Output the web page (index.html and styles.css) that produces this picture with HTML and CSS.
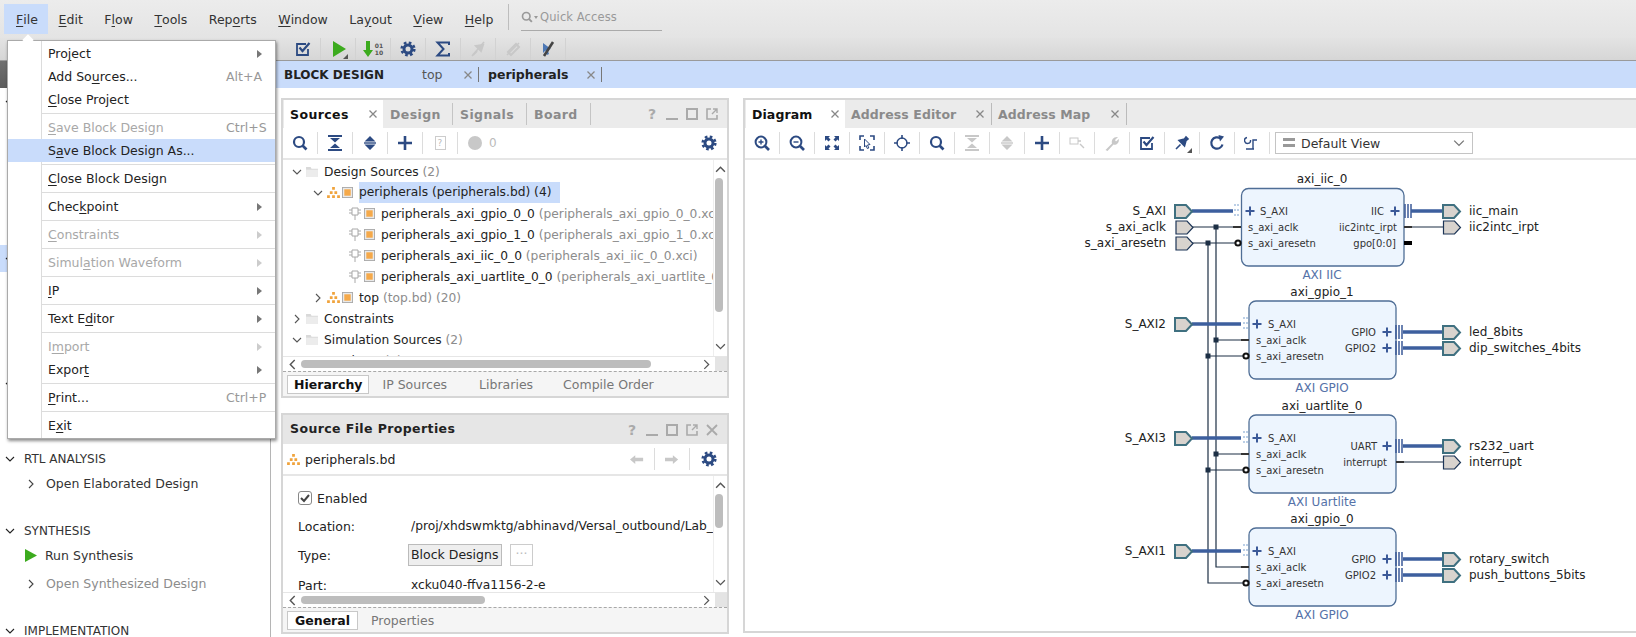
FILE: index.html
```html
<!DOCTYPE html>
<html lang="en">
<head>
    <meta charset="UTF-8">
    <title>Vivado - Block Design</title>
    <link rel="stylesheet" href="styles.css">
</head>
<body>
    <!-- Shared icons -->
    <svg class="defs" width="0" height="0">
        <symbol id="search" viewBox="0 0 16 16"><circle cx="7" cy="7" r="5" fill="none" stroke="currentColor" stroke-width="2.2"/><path d="M10.5 10.5 14.5 14.5" stroke="currentColor" stroke-width="2.6"/></symbol>
        <symbol id="collapse" viewBox="0 0 16 16"><path d="M1 1H15M1 15H15" stroke="currentColor" stroke-width="1.8"/><path d="M3 3H13L8 7.5ZM3 13H13L8 8.5Z" fill="currentColor"/></symbol>
        <symbol id="expand" viewBox="0 0 16 16"><path d="M8 1 13.5 6.5H2.5ZM8 15 13.5 9.5H2.5Z" fill="currentColor"/><path d="M2 8H14" stroke="currentColor" stroke-width="1.4"/></symbol>
        <symbol id="plus" viewBox="0 0 16 16"><path d="M8 1V15M1 8H15" stroke="currentColor" stroke-width="2.6"/></symbol>
        <symbol id="gear" viewBox="0 0 16 16"><circle cx="8" cy="8" r="4" fill="none" stroke="currentColor" stroke-width="3"/><circle cx="8" cy="8" r="6.3" fill="none" stroke="currentColor" stroke-width="2.6" stroke-dasharray="2.6 2.35"/></symbol>
        <symbol id="check" viewBox="0 0 16 16"><path d="M13 8V14H2V3H11" fill="none" stroke="currentColor" stroke-width="1.8"/><path d="M4.5 6.5 7.5 10 14.5 2" fill="none" stroke="currentColor" stroke-width="2.2"/></symbol>
        <symbol id="sigma" viewBox="0 0 16 16"><path d="M14 4V1.5H2.5L8.5 8 2.5 14.5H14V12" fill="none" stroke="currentColor" stroke-width="2"/></symbol>
        <symbol id="pinoff" viewBox="0 0 16 16"><path d="M3 14 7 10M6 5 11 10 13 4Z" fill="currentColor" stroke="currentColor" stroke-width="2"/><path d="M2 15 14 1" stroke="currentColor" stroke-width="1.6"/></symbol>
        <symbol id="plug" viewBox="0 0 16 16"><path d="M3 11 11 3 14 6 6 14Z" fill="none" stroke="currentColor" stroke-width="2"/><path d="M2 14 14 2" stroke="currentColor" stroke-width="1.5"/></symbol>
        <symbol id="crossmouse" viewBox="0 0 16 16"><path d="M3 2 11 8 7.5 8.5 9 13 7 14 5.5 9.5 3 12Z" fill="#4d78b5"/><path d="M13 1 4 15" stroke="#444" stroke-width="2.6"/></symbol>
        <symbol id="zoomin" viewBox="0 0 16 16"><circle cx="7" cy="7" r="5.4" fill="none" stroke="currentColor" stroke-width="2"/><path d="M11 11 15 15" stroke="currentColor" stroke-width="2.6"/><path d="M4.5 7H9.5M7 4.5V9.5" stroke="currentColor" stroke-width="1.4"/></symbol>
        <symbol id="zoomout" viewBox="0 0 16 16"><circle cx="7" cy="7" r="5.4" fill="none" stroke="currentColor" stroke-width="2"/><path d="M11 11 15 15" stroke="currentColor" stroke-width="2.6"/><path d="M4.5 7H9.5" stroke="currentColor" stroke-width="1.4"/></symbol>
        <symbol id="fit" viewBox="0 0 16 16"><path d="M1 1H6L4.5 2.5 6.5 4.5 4.5 6.5 2.5 4.5 1 6ZM15 1V6L13.500 4.500 11.500 6.500 9.500 4.500 11.500 2.500 10 1ZM1 15V10L2.500 11.500 4.500 9.500 6.500 11.500 4.500 13.500 6 15ZM15 15H10L11.500 13.500 9.500 11.500 11.500 9.500 13.500 11.500 15 10Z" fill="currentColor"/></symbol>
        <symbol id="area" viewBox="0 0 16 16"><path d="M1 5V1H5M11 1H15V5M15 11V15H11M5 15H1V11" fill="none" stroke="currentColor" stroke-width="1.6"/><path d="M5.500 4 11 9.500 8.500 10 9.800 13 8.300 13.500 7 10.500 5.500 12Z" fill="none" stroke="currentColor" stroke-width="1"/></symbol>
        <symbol id="target" viewBox="0 0 16 16"><circle cx="8" cy="8" r="5" fill="none" stroke="currentColor" stroke-width="1.4"/><path d="M8 0V4M8 12V16M0 8H4M12 8H16" stroke="currentColor" stroke-width="1.6"/></symbol>
        <symbol id="route" viewBox="0 0 16 16"><rect x="1" y="3" width="8" height="6" fill="none" stroke="currentColor"/><path d="M9 6H12M11 9 15 13" stroke="currentColor" stroke-width="1.4"/></symbol>
        <symbol id="wrench" viewBox="0 0 16 16"><path d="M1.500 15 8 8.500C7 5 9.500 1.500 14 2L11 5 12 6.500 14.800 4C15.500 8.500 11.500 10.500 9.500 9.500L3.500 16Z" fill="currentColor"/></symbol>
        <symbol id="pin" viewBox="0 0 16 16"><path d="M2 14 6.500 9.500M5 5.500 10.500 11 12 5.500 14 4 12 2 10.500 4Z" fill="currentColor" stroke="currentColor" stroke-width="1.6"/></symbol>
        <symbol id="refresh" viewBox="0 0 16 16"><path d="M13.500 9.500A5.700 5.700 0 1 1 11.500 3.500" fill="none" stroke="currentColor" stroke-width="2.200"/><path d="M9.500 0 15 1.500 11 6.500Z" fill="currentColor"/></symbol>
        <symbol id="regen" viewBox="0 0 16 16"><path d="M2 14H10M13 5H9V14" fill="none" stroke="currentColor" stroke-width="1.400"/><path d="M6.500 5A3 3 0 1 1 3 2.500" fill="none" stroke="currentColor" stroke-width="1.400"/></symbol>
        <symbol id="hier" viewBox="0 0 14 12"><path d="M5.500 0H8.500V3H5.500ZM3 4.500H6V7.500H3ZM8 4.500H11V7.500H8ZM0 9H3V12H0ZM5.500 9H8.500V12H5.500ZM11 9H14V12H11Z" fill="#f0a33c"/></symbol>
        <symbol id="sq" viewBox="0 0 12 12"><rect x=".5" y=".5" width="11" height="11" fill="#e9e9e9" stroke="#a9a9a9"/><rect x="2.500" y="2.500" width="7" height="7" fill="#f5a94a"/></symbol>
        <symbol id="cell" viewBox="0 0 12 13"><path d="M3 1H9V8H3ZM6 8V13M0 3H3M0 6H3M9 3H12M9 6H12" fill="none" stroke="#a8a8a8"/></symbol>
        <symbol id="folder" viewBox="0 0 13 12"><path d="M0 1H5L6 3H13V12H0Z" fill="#d9d9d9"/><path d="M0 4H13V12H0Z" fill="#ececec"/></symbol>
        <symbol id="down" viewBox="0 0 10 10"><path d="M1 3 5 7 9 3" fill="none" stroke="currentColor" stroke-width="1.100"/></symbol>
        <symbol id="right" viewBox="0 0 10 10"><path d="M3 1 7 5 3 9" fill="none" stroke="currentColor" stroke-width="1.100"/></symbol>
        <symbol id="up" viewBox="0 0 10 10"><path d="M1 7 5 3 9 7" fill="none" stroke="currentColor" stroke-width="1.300"/></symbol>
        <symbol id="left" viewBox="0 0 10 10"><path d="M7 1 3 5 7 9" fill="none" stroke="currentColor" stroke-width="1.300"/></symbol>
        <symbol id="close" viewBox="0 0 10 10"><path d="M1.500 1.500 8.500 8.500M8.500 1.500 1.500 8.500" stroke="currentColor" stroke-width="1.300"/></symbol>
        <symbol id="mini" viewBox="0 0 14 14"><path d="M1 12H13" stroke="currentColor" stroke-width="2"/></symbol>
        <symbol id="maxi" viewBox="0 0 14 14"><rect x="2" y="2" width="10" height="10" fill="none" stroke="currentColor" stroke-width="2"/></symbol>
        <symbol id="pop" viewBox="0 0 14 14"><path d="M6 2H2V12H12V8" fill="none" stroke="currentColor" stroke-width="1.600"/><path d="M7 7 12 2M8 2H12V6" fill="none" stroke="currentColor" stroke-width="1.400"/></symbol>
        <symbol id="big-x" viewBox="0 0 14 14"><path d="M2 2 12 12M12 2 2 12" stroke="currentColor" stroke-width="1.800"/></symbol>
        <symbol id="arrow-l" viewBox="0 0 16 10"><path d="M0 5 6 0V3H15V7H6V10Z" fill="currentColor"/></symbol>
        <symbol id="arrow-r" viewBox="0 0 16 10"><path d="M15 5 9 0V3H0V7H9V10Z" fill="currentColor"/></symbol>
        <symbol id="bars" viewBox="0 0 12 10"><path d="M0 0H12V3H0ZM0 6H12V9H0Z" fill="currentColor"/></symbol>
    </svg>

    <!-- Menu bar -->
    <div class="menubar">
        <div class="mb-item active"><u>F</u>ile</div>
        <div class="mb-item"><u>E</u>dit</div>
        <div class="mb-item">F<u>l</u>ow</div>
        <div class="mb-item"><u>T</u>ools</div>
        <div class="mb-item">Rep<u>o</u>rts</div>
        <div class="mb-item"><u>W</u>indow</div>
        <div class="mb-item">La<u>y</u>out</div>
        <div class="mb-item"><u>V</u>iew</div>
        <div class="mb-item"><u>H</u>elp</div>
        <div class="quick">
            <svg class="quick-ic"><use href="#search"/></svg><span class="quick-caret"></span>
            <span>Quick Access</span>
        </div>
    </div>

    <!-- Main toolbar -->
    <div class="toolbar">
        <div class="tb-btn navy"><svg class="ic"><use href="#check"/></svg></div>
        <div class="tb-btn">
            <svg class="ic"><path d="M3 0 16 8 3 16Z" fill="#3cab1e"/></svg>
            <span class="corner"></span>
        </div>
        <div class="tb-btn">
            <svg class="ic bit"><path d="M3 0H7V9H10L5 16 0 9H3Z" fill="#3cab1e"/></svg>
            <span class="bits">01<br>10</span>
        </div>
        <div class="tb-btn navy"><svg class="ic"><use href="#gear"/></svg></div>
        <div class="tb-btn navy"><svg class="ic"><use href="#sigma"/></svg></div>
        <div class="tb-btn off"><svg class="ic"><use href="#pinoff"/></svg></div>
        <div class="tb-btn off"><svg class="ic"><use href="#plug"/></svg></div>
        <div class="tb-btn"><svg class="ic"><use href="#crossmouse"/></svg></div>
    </div>

    <div class="workspace">
        <!-- Flow navigator -->
        <aside class="nav">
            <div class="nav-header"></div>
            <div class="nav-head first"><svg class="nav-chev"><use href="#down"/></svg></div>
            <div class="nav-blank-a"></div>
            <div class="nav-head picked"><svg class="nav-chev"><use href="#down"/></svg></div>
            <div class="nav-blank-b"></div>
            <div class="nav-head"><svg class="nav-chev"><use href="#down"/></svg></div>
            <div class="nav-blank-c"></div>

            <div class="nav-head"><svg class="nav-chev"><use href="#down"/></svg><span>RTL ANALYSIS</span></div>
            <div class="nav-item"><svg class="nav-arrow"><use href="#right"/></svg><span>Open Elaborated Design</span></div>

            <div class="nav-head gap"><svg class="nav-chev"><use href="#down"/></svg><span>SYNTHESIS</span></div>
            <div class="nav-item"><svg class="nav-run"><path d="M0 0 12 6.500 0 13Z" fill="#3cab1e"/></svg><span>Run Synthesis</span></div>
            <div class="nav-item muted"><svg class="nav-arrow"><use href="#right"/></svg><span>Open Synthesized Design</span></div>

            <div class="nav-head gap"><svg class="nav-chev"><use href="#down"/></svg><span>IMPLEMENTATION</span></div>
        </aside>

        <main class="content">
            <!-- Document tabs -->
            <div class="doc-tabs">
                <span class="doc-title">BLOCK DESIGN</span>
                <span class="doc-tab top-tab">top</span>
                <svg class="doc-x"><use href="#close"/></svg>
                <span class="doc-sep"></span>
                <span class="doc-tab current">peripherals</span>
                <svg class="doc-x"><use href="#close"/></svg>
                <span class="doc-sep"></span>
            </div>

            <div class="panels">
                <div class="left-col">
                    <!-- Sources -->
                    <section class="panel sources">
                        <div class="panel-head">
                            <div class="tab on"><span>Sources</span><svg class="tab-x"><use href="#close"/></svg></div>
                            <div class="tab plain">Design</div>
                            <div class="tab plain">Signals</div>
                            <div class="tab plain">Board</div>
                            <div class="head-tools">
                                <span class="qm">?</span>
                                <svg class="win"><use href="#mini"/></svg>
                                <svg class="win"><use href="#maxi"/></svg>
                                <svg class="win"><use href="#pop"/></svg>
                            </div>
                        </div>
                        <div class="panel-tools">
                            <div class="tb-btn navy"><svg class="ic"><use href="#search"/></svg></div>
                            <div class="tb-btn navy"><svg class="ic"><use href="#collapse"/></svg></div>
                            <div class="tb-btn navy"><svg class="ic"><use href="#expand"/></svg></div>
                            <div class="tb-btn navy"><svg class="ic"><use href="#plus"/></svg></div>
                            <div class="tb-btn off"><span class="doc-q">?</span></div>
                            <div class="tool-count"><span class="dot"></span><span>0</span></div>
                            <div class="tool-right navy"><svg class="ic"><use href="#gear"/></svg></div>
                        </div>
                        <div class="panel-body">
                            <div class="tree">
                                <div class="row lvl0"><svg class="chev"><use href="#down"/></svg><svg class="folder"><use href="#folder"/></svg><span>Design Sources <em>(2)</em></span></div>
                                <div class="row lvl1"><svg class="chev"><use href="#down"/></svg><svg class="hier"><use href="#hier"/></svg><svg class="sq"><use href="#sq"/></svg><span class="picked-row">peripherals (peripherals.bd) (4)</span></div>
                                <div class="row lvl2"><svg class="cell"><use href="#cell"/></svg><svg class="sq"><use href="#sq"/></svg><span>peripherals_axi_gpio_0_0 <em>(peripherals_axi_gpio_0_0.xci)</em></span></div>
                                <div class="row lvl2"><svg class="cell"><use href="#cell"/></svg><svg class="sq"><use href="#sq"/></svg><span>peripherals_axi_gpio_1_0 <em>(peripherals_axi_gpio_1_0.xci)</em></span></div>
                                <div class="row lvl2"><svg class="cell"><use href="#cell"/></svg><svg class="sq"><use href="#sq"/></svg><span>peripherals_axi_iic_0_0 <em>(peripherals_axi_iic_0_0.xci)</em></span></div>
                                <div class="row lvl2"><svg class="cell"><use href="#cell"/></svg><svg class="sq"><use href="#sq"/></svg><span>peripherals_axi_uartlite_0_0 <em>(peripherals_axi_uartlite_0_0.xci)</em></span></div>
                                <div class="row lvl1"><svg class="chev"><use href="#right"/></svg><svg class="hier"><use href="#hier"/></svg><svg class="sq"><use href="#sq"/></svg><span>top <em>(top.bd) (20)</em></span></div>
                                <div class="row lvl0"><svg class="chev"><use href="#right"/></svg><svg class="folder"><use href="#folder"/></svg><span>Constraints</span></div>
                                <div class="row lvl0"><svg class="chev"><use href="#down"/></svg><svg class="folder"><use href="#folder"/></svg><span>Simulation Sources <em>(2)</em></span></div>
                                <div class="row lvl1"><svg class="chev"><use href="#right"/></svg><svg class="folder"><use href="#folder"/></svg><span>sim_1 <em>(2)</em></span></div>
                            </div>
                            <div class="vscroll">
                                <svg class="sb-arrow"><use href="#up"/></svg>
                                <div class="vtrack"><div class="vthumb src"></div></div>
                                <svg class="sb-arrow"><use href="#down"/></svg>
                            </div>
                        </div>
                        <div class="hscroll">
                            <svg class="sb-arrow"><use href="#left"/></svg>
                            <div class="htrack"><div class="hthumb src"></div></div>
                            <svg class="sb-arrow"><use href="#right"/></svg>
                            <div class="sb-corner"></div>
                        </div>
                        <div class="sub-tabs">
                            <span class="sub on">Hierarchy</span>
                            <span class="sub">IP Sources</span>
                            <span class="sub">Libraries</span>
                            <span class="sub">Compile Order</span>
                        </div>
                    </section>

                    <!-- Source File Properties -->
                    <section class="panel props">
                        <div class="panel-head">
                            <div class="prop-title">Source File Properties</div>
                            <div class="head-tools">
                                <span class="qm">?</span>
                                <svg class="win"><use href="#mini"/></svg>
                                <svg class="win"><use href="#maxi"/></svg>
                                <svg class="win"><use href="#pop"/></svg>
                                <svg class="win"><use href="#big-x"/></svg>
                            </div>
                        </div>
                        <div class="panel-tools prop-tools">
                            <svg class="hier prop-hier"><use href="#hier"/></svg>
                            <span class="prop-file">peripherals.bd</span>
                            <div class="tb-btn off"><svg class="arrow"><use href="#arrow-l"/></svg></div>
                            <div class="tb-btn off"><svg class="arrow"><use href="#arrow-r"/></svg></div>
                            <div class="tool-right navy"><svg class="ic"><use href="#gear"/></svg></div>
                        </div>
                        <div class="panel-body">
                            <div class="form">
                                <div class="f-enabled"><span class="checkbox"><svg viewBox="0 0 12 12"><path d="M2 6 5 9 10 3" fill="none" stroke="#444" stroke-width="2"/></svg></span><span>Enabled</span></div>
                                <div class="f-row f-loc"><span class="f-label">Location:</span><span class="f-val">/proj/xhdswmktg/abhinavd/Versal_outbound/Lab_1/Lab_1.srcs</span></div>
                                <div class="f-row f-type"><span class="f-label">Type:</span><span class="f-btn">Block Designs</span><span class="f-more">···</span></div>
                                <div class="f-row f-part"><span class="f-label">Part:</span><span class="f-val">xcku040-ffva1156-2-e</span></div>
                            </div>
                            <div class="vscroll">
                                <svg class="sb-arrow"><use href="#up"/></svg>
                                <div class="vtrack"><div class="vthumb prop"></div></div>
                                <svg class="sb-arrow"><use href="#down"/></svg>
                            </div>
                        </div>
                        <div class="hscroll">
                            <svg class="sb-arrow"><use href="#left"/></svg>
                            <div class="htrack"><div class="hthumb prop"></div></div>
                            <svg class="sb-arrow"><use href="#right"/></svg>
                            <div class="sb-corner"></div>
                        </div>
                        <div class="sub-tabs">
                            <span class="sub on">General</span>
                            <span class="sub">Properties</span>
                        </div>
                    </section>
                </div>

                <!-- Diagram -->
                <section class="panel diagram">
                    <div class="panel-head">
                        <div class="tab on dia-tab"><span>Diagram</span><svg class="tab-x"><use href="#close"/></svg></div>
                        <div class="tab dim addr-ed"><span>Address Editor</span><svg class="tab-x"><use href="#close"/></svg></div>
                        <div class="tab dim addr-map"><span>Address Map</span><svg class="tab-x"><use href="#close"/></svg></div>
                    </div>
                    <div class="panel-tools">
                        <div class="tb-btn navy"><svg class="ic"><use href="#zoomin"/></svg></div>
                        <div class="tb-btn navy"><svg class="ic"><use href="#zoomout"/></svg></div>
                        <div class="tb-btn navy"><svg class="ic"><use href="#fit"/></svg></div>
                        <div class="tb-btn navy"><svg class="ic"><use href="#area"/></svg></div>
                        <div class="tb-btn navy"><svg class="ic"><use href="#target"/></svg></div>
                        <div class="tb-btn navy"><svg class="ic"><use href="#search"/></svg></div>
                        <div class="tb-btn off"><svg class="ic"><use href="#collapse"/></svg></div>
                        <div class="tb-btn off"><svg class="ic"><use href="#expand"/></svg></div>
                        <div class="tb-btn navy"><svg class="ic"><use href="#plus"/></svg></div>
                        <div class="tb-btn off"><svg class="ic"><use href="#route"/></svg></div>
                        <div class="tb-btn off"><svg class="ic"><use href="#wrench"/></svg></div>
                        <div class="tb-btn navy"><svg class="ic"><use href="#check"/></svg></div>
                        <div class="tb-btn navy"><svg class="ic"><use href="#pin"/></svg><span class="corner"></span></div>
                        <div class="tb-btn navy"><svg class="ic"><use href="#refresh"/></svg></div>
                        <div class="tb-btn navy"><svg class="ic"><use href="#regen"/></svg></div>
                        <div class="view-select">
                            <svg class="view-ic"><use href="#bars"/></svg>
                            <span>Default View</span>
                            <svg class="view-chev"><use href="#down"/></svg>
                        </div>
                    </div>
                    <svg class="canvas" viewBox="745 160 891 472">
                        <defs>
                            <path id="pb" d="M0 0H11L17 6.500 11 13H0Z" fill="#d8d3ce" stroke="#3f7080" stroke-width="2"/>
                            <path id="pw" d="M0 0H11L17 6.500 11 13H0Z" fill="#d8d3ce" stroke="#1d3557" stroke-width="1.200"/>
                            <path id="pl" d="M-4.500 0H4.500M0 -4.500V4.500" stroke="#3b5998" stroke-width="2"/>
                            <path id="br" d="M0 -7V7M3 -7V7M6 -7V7" stroke="#3b5998" stroke-width="1.500"/>
                            <path id="ds" d="M0 -7V-5M3 -7V-5M0 -2V0M3 -2V0M0 3V5M3 3V5" stroke="#8fb0d6" stroke-width="1.200"/>
                            <rect id="nd" x="-2.500" y="-2.500" width="5" height="5" fill="#1d2f45"/>
                            <g id="left-pins">
                                <rect width="147" height="78" rx="7" fill="#edf5fe" stroke="#4f6e96" stroke-width="1.300"/>
                                <use href="#ds" x="-5" y="23"/>
                                <use href="#pl" x="8" y="23"/>
                                <text class="d-pin" x="19" y="26.500">S_AXI</text>
                                <text class="d-pin" x="7" y="42.500">s_axi_aclk</text>
                                <text class="d-pin" x="7" y="58.500">s_axi_aresetn</text>
                                <path d="M-8 39H0" stroke="#333" stroke-width="2"/>
                                <circle cx="-3" cy="55" r="2.600" fill="#fff" stroke="#111" stroke-width="2"/>
                            </g>
                        </defs>

                        <!-- Clock and reset nets -->
                        <path class="net" d="M1192 227H1233M1192 243H1236M1216 227V567H1241M1208 243V583H1243M1216 340H1241M1208 356H1243M1216 454H1241M1208 470H1243M1412 227H1443M1404 462H1443"/>
                        <use href="#nd" x="1216" y="227"/>
                        <use href="#nd" x="1208" y="243"/>
                        <use href="#nd" x="1216" y="340"/>
                        <use href="#nd" x="1208" y="356"/>
                        <use href="#nd" x="1216" y="454"/>
                        <use href="#nd" x="1208" y="470"/>

                        <!-- axi_iic_0 -->
                        <text class="d-title" x="1322" y="182.500">axi_iic_0</text>
                        <rect x="1241.500" y="188.500" width="162.500" height="77.500" rx="7" fill="#edf5fe" stroke="#4f6e96" stroke-width="1.300"/>
                        <use href="#ds" x="1235" y="211"/>
                        <use href="#pl" x="1250" y="211"/>
                        <text class="d-pin" x="1260" y="214.500">S_AXI</text>
                        <text class="d-pin" x="1248" y="230.500">s_axi_aclk</text>
                        <text class="d-pin" x="1248" y="246.500">s_axi_aresetn</text>
                        <path d="M1233 227H1241M1404 227H1412" stroke="#333" stroke-width="2"/>
                        <circle cx="1238" cy="243" r="2.600" fill="#fff" stroke="#111" stroke-width="2"/>
                        <text class="d-pin end" x="1384" y="214.500">IIC</text>
                        <text class="d-pin end" x="1397" y="230.500">iic2intc_irpt</text>
                        <text class="d-pin end" x="1396" y="246.500">gpo[0:0]</text>
                        <use href="#pl" x="1395" y="211"/>
                        <use href="#br" x="1405" y="211"/>
                        <path d="M1404 243H1412" stroke="#000" stroke-width="4"/>
                        <text class="d-ip" x="1322" y="278.500">AXI IIC</text>

                        <!-- axi_gpio_1 -->
                        <text class="d-title" x="1322" y="295.500">axi_gpio_1</text>
                        <use href="#left-pins" x="1249" y="301"/>
                        <text class="d-pin end" x="1376" y="335.500">GPIO</text>
                        <text class="d-pin end" x="1376" y="351.500">GPIO2</text>
                        <use href="#pl" x="1387" y="332"/>
                        <use href="#pl" x="1387" y="348"/>
                        <use href="#br" x="1396" y="332"/>
                        <use href="#br" x="1396" y="348"/>
                        <text class="d-ip" x="1322" y="391.500">AXI GPIO</text>

                        <!-- axi_uartlite_0 -->
                        <text class="d-title" x="1322" y="409.500">axi_uartlite_0</text>
                        <use href="#left-pins" x="1249" y="415"/>
                        <text class="d-pin end" x="1377" y="449.500">UART</text>
                        <text class="d-pin end" x="1387" y="465.500">interrupt</text>
                        <use href="#pl" x="1387" y="446"/>
                        <use href="#br" x="1396" y="446"/>
                        <path d="M1396 462H1404" stroke="#333" stroke-width="2"/>
                        <text class="d-ip" x="1322" y="505.500">AXI Uartlite</text>

                        <!-- axi_gpio_0 -->
                        <text class="d-title" x="1322" y="522.500">axi_gpio_0</text>
                        <use href="#left-pins" x="1249" y="528"/>
                        <text class="d-pin end" x="1376" y="562.500">GPIO</text>
                        <text class="d-pin end" x="1376" y="578.500">GPIO2</text>
                        <use href="#pl" x="1387" y="559"/>
                        <use href="#pl" x="1387" y="575"/>
                        <use href="#br" x="1396" y="559"/>
                        <use href="#br" x="1396" y="575"/>
                        <text class="d-ip" x="1322" y="618.500">AXI GPIO</text>

                        <!-- Bus nets -->
                        <path class="bus" d="M1192 211H1233M1192 324H1241M1192 438H1241M1192 551H1241M1411 211H1443M1403 332H1443M1403 348H1443M1403 446H1443M1403 559H1443M1403 575H1443"/>

                        <!-- Left ports -->
                        <use href="#pb" x="1175" y="205"/>
                        <use href="#pw" x="1176" y="221"/>
                        <use href="#pw" x="1176" y="237"/>
                        <use href="#pb" x="1175" y="318"/>
                        <use href="#pb" x="1175" y="432"/>
                        <use href="#pb" x="1175" y="545"/>
                        <text class="d-port end" x="1166" y="215">S_AXI</text>
                        <text class="d-port end" x="1166" y="231">s_axi_aclk</text>
                        <text class="d-port end" x="1166" y="247">s_axi_aresetn</text>
                        <text class="d-port end" x="1166" y="328">S_AXI2</text>
                        <text class="d-port end" x="1166" y="442">S_AXI3</text>
                        <text class="d-port end" x="1166" y="555">S_AXI1</text>

                        <!-- Right ports -->
                        <use href="#pb" x="1443" y="205"/>
                        <use href="#pw" x="1443.500" y="221"/>
                        <use href="#pb" x="1443" y="326"/>
                        <use href="#pb" x="1443" y="342"/>
                        <use href="#pb" x="1443" y="440"/>
                        <use href="#pw" x="1443.500" y="456"/>
                        <use href="#pb" x="1443" y="553"/>
                        <use href="#pb" x="1443" y="569"/>
                        <text class="d-port" x="1469" y="215">iic_main</text>
                        <text class="d-port" x="1469" y="231">iic2intc_irpt</text>
                        <text class="d-port" x="1469" y="336">led_8bits</text>
                        <text class="d-port" x="1469" y="352">dip_switches_4bits</text>
                        <text class="d-port" x="1469" y="450">rs232_uart</text>
                        <text class="d-port" x="1469" y="466">interrupt</text>
                        <text class="d-port" x="1469" y="563">rotary_switch</text>
                        <text class="d-port" x="1469" y="579">push_buttons_5bits</text>
                    </svg>
                </section>
            </div>
        </main>
    </div>

    <!-- File menu -->
    <div class="menu">
        <div class="mi">Pro<u>j</u>ect<i class="sub-arrow"></i></div>
        <div class="mi">Add So<u>u</u>rces...<span class="sc">Alt+A</span></div>
        <div class="mi"><u>C</u>lose Project</div>
        <div class="msep"></div>
        <div class="mi dis"><u>S</u>ave Block Design<span class="sc">Ctrl+S</span></div>
        <div class="mi hot">S<u>a</u>ve Block Design As...</div>
        <div class="msep"></div>
        <div class="mi"><u>C</u>lose Block Design</div>
        <div class="msep"></div>
        <div class="mi">Chec<u>k</u>point<i class="sub-arrow"></i></div>
        <div class="msep"></div>
        <div class="mi dis"><u>C</u>onstraints<i class="sub-arrow"></i></div>
        <div class="msep"></div>
        <div class="mi dis">Simul<u>a</u>tion Waveform<i class="sub-arrow"></i></div>
        <div class="msep"></div>
        <div class="mi"><u>I</u>P<i class="sub-arrow"></i></div>
        <div class="msep"></div>
        <div class="mi">Text E<u>d</u>itor<i class="sub-arrow"></i></div>
        <div class="msep"></div>
        <div class="mi dis">I<u>m</u>port<i class="sub-arrow"></i></div>
        <div class="mi">Expor<u>t</u><i class="sub-arrow"></i></div>
        <div class="msep"></div>
        <div class="mi"><u>P</u>rint...<span class="sc">Ctrl+P</span></div>
        <div class="msep"></div>
        <div class="mi">E<u>x</u>it</div>
    </div>
</body>
</html>
```

FILE: styles.css
```css
* {
    box-sizing: border-box;
}

html, body {
    margin: 0;
    height: 637px;
    overflow: hidden;
}

body {
    position: relative;
    width: 1636px;
    font-family: "DejaVu Sans", sans-serif;
    font-size: 12.5px;
    color: #222;
    background-color: #fff;
}

.defs {
    position: absolute;
}

u {
    text-underline-offset: 2px;
}

em {
    font-style: normal;
    color: #8c8c8c;
}

/* Menu bar */
.menubar {
    height: 38px;
    display: flex;
    padding: 4px 0 0 4px;
    background: linear-gradient(#ececec, #e4e4e4);
    color: #333;
}

.mb-item {
    height: 30px;
    padding: 0 10.75px;
    display: flex;
    align-items: center;
    white-space: pre;
}

.mb-item.active {
    background-color: #c9dcfb;
    padding: 0 10px 0 12px;
}

.quick {
    margin: 0 0 0 4px;
    padding-left: 12px;
    height: 26px;
    border-left: 1px solid #bdbdbd;
    display: flex;
    align-items: center;
    position: relative;
    width: 154px;
    color: #999;
    font-size: 11.5px;
    letter-spacing: .1px;
}

.quick::after {
    content: "";
    position: absolute;
    left: 12px;
    right: 0;
    bottom: -1px;
    border-bottom: 1px solid #aaa;
}

.quick-ic {
    width: 12px;
    height: 12px;
    color: #999;
}

.quick-caret {
    width: 0;
    height: 0;
    margin: 0 2px 0 1px;
    border-top: 3px solid #999;
    border-left: 2px solid transparent;
    border-right: 2px solid transparent;
}

/* Toolbars */
.toolbar {
    height: 23px;
    display: flex;
    padding-left: 286px;
    background: linear-gradient(#e3e3e3, #d6d6d6);
    border-bottom: 1px solid #9a9a9a;
}

.tb-btn {
    width: 35px;
    display: flex;
    align-items: center;
    justify-content: center;
    position: relative;
    border-right: 1px solid #dcdcdc;
    flex: none;
}

.toolbar .tb-btn {
    border-right-color: #d2d2d2;
}

.ic {
    width: 16px;
    height: 16px;
}

.navy {
    color: #2c4a82;
}

.off {
    color: #c8c8c8;
}

.corner {
    position: absolute;
    right: 7px;
    bottom: 1px;
    border-bottom: 5px solid #555;
    border-left: 5px solid transparent;
}

.bit {
    width: 10px;
}

.bits {
    font-size: 6px;
    line-height: 7px;
    font-weight: bold;
    color: #555;
    margin-left: 2px;
}

/* Layout */
.workspace {
    height: 576px;
    display: flex;
}

.nav {
    width: 271px;
    flex: none;
    border-right: 1px solid #b5b5b5;
    color: #333;
}

.nav-header {
    height: 27px;
    background: linear-gradient(#707070, #5c5c5c);
}

.nav-head {
    height: 22px;
    display: flex;
    align-items: center;
    padding: 2px 0 0 5px;
    font-size: 12px;
}

.nav-head.first {
    margin-top: 3px;
}

.nav-head.picked {
    height: 27px;
    background-color: #c9dcfb;
}

.nav-head.gap {
    margin-top: 22px;
}

.nav-blank-a {
    height: 132px;
}

.nav-blank-b {
    height: 101px;
}

.nav-blank-c {
    height: 52px;
}

.nav-chev {
    width: 10px;
    height: 10px;
    margin-right: 9px;
    color: #222;
    flex: none;
}

.nav-item {
    height: 28px;
    display: flex;
    align-items: center;
    padding-left: 25px;
}

.nav-item.muted {
    color: #8c8c8c;
}

.nav-arrow {
    width: 10px;
    height: 10px;
    margin: 1px 10px 0 1px;
    color: #444;
}

.nav-run {
    width: 12px;
    height: 13px;
    margin-right: 8px;
}

.content {
    flex: 1;
    min-width: 0;
}

.doc-tabs {
    height: 27px;
    background-color: #c9dcfb;
    display: flex;
    align-items: center;
    padding-left: 13px;
}

.doc-title {
    font-weight: bold;
    font-size: 12px;
    width: 138px;
}

.doc-tab.current {
    font-weight: bold;
    margin-left: 9px;
    width: 98px;
}

.top-tab {
    width: 41px;
    color: #555;
}

.doc-x {
    width: 10px;
    height: 10px;
    color: #888;
    flex: none;
}

.doc-sep {
    width: 1px;
    height: 15px;
    margin-left: 5px;
    background-color: #777;
}

.panels {
    height: 549px;
    padding: 10px 0 0 10px;
    display: flex;
    gap: 14px;
}

.left-col {
    width: 448px;
    flex: none;
    display: flex;
    flex-direction: column;
    gap: 15px;
}

.panel {
    border: 2px solid #d6d6d6;
    display: flex;
    flex-direction: column;
    background-color: #fff;
    overflow: hidden;
}

.panel.sources {
    height: 300px;
}

.panel.props {
    height: 221px;
}

.panel.diagram {
    flex: 1;
    height: 535px;
    border-right: 0;
    min-width: 0;
}

.panel-head {
    height: 28px;
    flex: none;
    display: flex;
    background-color: #ebebeb;
    align-items: stretch;
}

.props .panel-head {
    height: 29px;
    background-color: #e6e6e6;
}

.tab {
    display: flex;
    align-items: center;
    font-weight: bold;
    font-size: 12.5px;
    letter-spacing: .4px;
    color: #8a8a8a;
}

.tab.on {
    background-color: #fff;
    color: #111;
    width: 99px;
    margin-left: 1px;
    padding-left: 6px;
    justify-content: space-between;
    padding-right: 5px;
}

.tab.plain {
    padding: 0 7px;
    height: 22px;
    align-self: center;
    border-right: 1px solid #c4c4c4;
}

.sources .tab.plain:nth-child(2) {
    width: 70px;
}

.sources .tab.plain:nth-child(3) {
    width: 74px;
}

.sources .tab.plain:nth-child(4) {
    width: 64px;
}

.tab-x {
    width: 10px;
    height: 10px;
    color: #888;
}

.diagram .tab {
    letter-spacing: .1px;
}

.dia-tab.on {
    width: 99px;
    padding-right: 5px;
}

.tab.dim {
    justify-content: space-between;
    height: 22px;
    align-self: center;
    padding: 0 6px 0 6px;
    border-right: 1px solid #bbb;
}

.addr-ed {
    width: 147px;
}

.addr-map {
    width: 135px;
}

.head-tools {
    margin-left: auto;
    display: flex;
    align-items: center;
    gap: 6px;
    padding-right: 8px;
    color: #aaa;
}

.qm {
    width: 14px;
    text-align: center;
    font-weight: bold;
    font-size: 14px;
}

.win {
    width: 14px;
    height: 14px;
}

.prop-title {
    padding: 0 0 2px 7px;
    display: flex;
    align-items: center;
    font-weight: bold;
    letter-spacing: .4px;
}

.panel-tools {
    height: 32px;
    flex: none;
    display: flex;
    align-items: stretch;
    padding: 4px 0 4px 0;
    border-bottom: 2px solid #e6e6e6;
}

.tool-count {
    display: flex;
    align-items: center;
    gap: 7px;
    padding-left: 10px;
    color: #bbb;
    font-size: 12px;
}

.dot {
    width: 14px;
    height: 14px;
    border-radius: 50%;
    background-color: #c8c8c8;
}

.tool-right {
    margin-left: auto;
    padding-right: 10px;
    display: flex;
    align-items: center;
}

.doc-q {
    width: 11px;
    height: 14px;
    border: 1px solid #ccc;
    font-size: 9px;
    text-align: center;
    line-height: 12px;
    color: #bbb;
}

.prop-hier {
    margin: auto 5px auto 7px;
}

.prop-file {
    display: flex;
    align-items: center;
    flex: 1;
}

.prop-tools .tb-btn {
    width: 35px;
}

.prop-tools .tool-right {
    margin-left: 0;
    width: 37px;
    justify-content: flex-end;
}

.arrow {
    width: 14px;
    height: 9px;
}

.panel-body {
    flex: 1;
    min-height: 0;
    display: flex;
}

/* Tree */
.tree {
    flex: 1;
    min-width: 0;
    padding-top: 1px;
    overflow: hidden;
    white-space: nowrap;
    font-size: 12.25px;
}

.row {
    height: 21px;
    display: flex;
    align-items: center;
}

.row > span {
    flex: none;
}

.lvl0 {
    padding-left: 9px;
}

.lvl1 {
    padding-left: 30px;
}

.lvl2 {
    padding-left: 66px;
}

.chev {
    width: 10px;
    height: 10px;
    color: #555;
    flex: none;
}

.folder {
    width: 12px;
    height: 11px;
    margin: 0 6px 0 4px;
    flex: none;
}

.hier {
    width: 13px;
    height: 11px;
    margin-left: 4px;
    flex: none;
}

.sq {
    width: 11px;
    height: 11px;
    margin: 0 6px 0 2px;
    flex: none;
}

.cell {
    width: 12px;
    height: 13px;
    margin-right: 1px;
    flex: none;
}

.picked-row {
    background-color: #c9dcfb;
    height: 21px;
    line-height: 21px;
    width: 201px;
}

/* Scrollbars */
.vscroll {
    width: 14px;
    flex: none;
    display: flex;
    flex-direction: column;
    align-items: center;
    padding: 4px 0;
    color: #555;
    border-left: 1px solid #eee;
}

.sb-arrow {
    width: 11px;
    height: 11px;
    flex: none;
    color: #555;
}

.vtrack {
    flex: 1;
    width: 100%;
}

.vthumb {
    width: 8px;
    margin-left: 1px;
    border-radius: 4px;
    background-color: #bdbdbd;
}

.vthumb.src {
    height: 134px;
    margin-top: 3px;
}

.vthumb.prop {
    height: 34px;
    margin-top: 3px;
}

.hscroll {
    height: 15px;
    flex: none;
    display: flex;
    align-items: center;
    padding-left: 4px;
    color: #555;
    border-top: 1px solid #e6e6e6;
}

.htrack {
    flex: 1;
    padding-left: 3px;
}

.hthumb {
    height: 8px;
    border-radius: 4px;
    background-color: #bdbdbd;
}

.hthumb.src {
    width: 350px;
}

.hthumb.prop {
    width: 184px;
}

.hscroll .sb-arrow:nth-of-type(2) {
    margin-right: 3px;
}

.sb-corner {
    width: 12px;
    height: 14px;
    background-color: #e4e4e4;
}

.sub-tabs {
    height: 25px;
    flex: none;
    display: flex;
    align-items: center;
    padding-left: 4px;
    border-top: 1px dashed #a8a8a8;
    background-color: #f5f5f5;
    color: #777;
}

.sub {
    margin-right: 30px;
}

.sub:nth-child(2) {
    margin-right: 32px;
}

.sub.on {
    height: 19px;
    line-height: 17px;
    padding: 0 6px;
    margin-right: 13px;
    background-color: #fff;
    border: 1px solid #c8c8c8;
    font-weight: bold;
    color: #111;
}

.props .sub.on {
    padding: 0 7px;
}

/* Properties form */
.form {
    flex: 1;
    min-width: 0;
    overflow: hidden;
    white-space: nowrap;
    padding: 14px 0 0 15px;
}

.f-enabled {
    display: flex;
    align-items: center;
    gap: 5px;
    height: 16px;
}

.checkbox {
    width: 14px;
    height: 14px;
    border: 1px solid #888;
    border-radius: 3px;
    display: flex;
}

.f-row {
    display: flex;
    align-items: center;
    height: 22px;
}

.f-label {
    width: 113px;
    flex: none;
}

.f-val {
    font-size: 12.25px;
}

.f-loc {
    margin-top: 9px;
}

.f-type {
    margin-top: 7px;
}

.f-type .f-label {
    width: 110px;
}

.f-part {
    margin-top: 8px;
}

.f-btn {
    width: 94px;
    height: 22px;
    line-height: 20px;
    padding-left: 2px;
    background-color: #eee;
    border: 1px solid #bbb;
}

.f-more {
    width: 23px;
    height: 22px;
    line-height: 18px;
    margin-left: 8px;
    text-align: center;
    color: #bbb;
    border: 1px solid #ccc;
}

/* Diagram toolbar */
.diagram .panel-tools {
    padding-left: 0;
    align-items: stretch;
}

.view-select {
    width: 198px;
    margin: 0 0 0 5px;
    border: 1px solid #c4c4c4;
    display: flex;
    align-items: center;
    padding: 0 7px;
    color: #333;
}

.view-ic {
    width: 12px;
    height: 10px;
    color: #999;
    margin-right: 6px;
}

.view-chev {
    width: 12px;
    height: 12px;
    margin-left: auto;
    color: #777;
}

/* Diagram canvas */
.canvas {
    display: block;
    width: 891px;
    height: 472px;
    flex: none;
}

.canvas text {
    font-family: "DejaVu Sans", sans-serif;
}

.net {
    fill: none;
    stroke: #1d2f45;
    stroke-width: 1.2;
}

.bus {
    fill: none;
    stroke: #3d5f9e;
    stroke-width: 3.5;
}

.d-title {
    font-size: 12px;
    text-anchor: middle;
    fill: #222;
}

.d-port {
    font-size: 12px;
    fill: #222;
}

.d-pin {
    font-size: 10px;
    fill: #333;
}

.d-ip {
    font-size: 12px;
    text-anchor: middle;
    fill: #5572a8;
}

.canvas .end {
    text-anchor: end;
}

/* File menu */
.menu {
    position: absolute;
    left: 7px;
    top: 40px;
    width: 269px;
    padding: 1px 0;
    border: 1px solid #aaa;
    background: linear-gradient(#dcdcdc, #dcdcdc) 33px 0 / 1px 100% no-repeat, #fff;
    box-shadow: 1px 2px 3px rgba(0, 0, 0, .45);
    color: #222;
}

.menu::before {
    content: "";
    position: absolute;
    left: 16px;
    top: -5px;
    width: 8px;
    height: 8px;
    background-color: #fff;
    transform: rotate(45deg);
}

.mi {
    height: 23px;
    display: flex;
    align-items: center;
    padding-left: 40px;
    white-space: pre;
    position: relative;
}

.mi.hot {
    background-color: #c9dcfb;
}

.mi.dis {
    color: #a8a8a8;
}

.msep {
    height: 5px;
    margin-left: 33px;
    background: linear-gradient(#dcdcdc, #dcdcdc) 0 2px / 100% 1px no-repeat;
}

.sc {
    position: absolute;
    left: 218px;
    color: #999;
}

.sub-arrow {
    position: absolute;
    right: 13px;
    border-left: 5px solid #777;
    border-top: 4px solid transparent;
    border-bottom: 4px solid transparent;
}

.mi.dis .sub-arrow {
    border-left-color: #ccc;
}
```
